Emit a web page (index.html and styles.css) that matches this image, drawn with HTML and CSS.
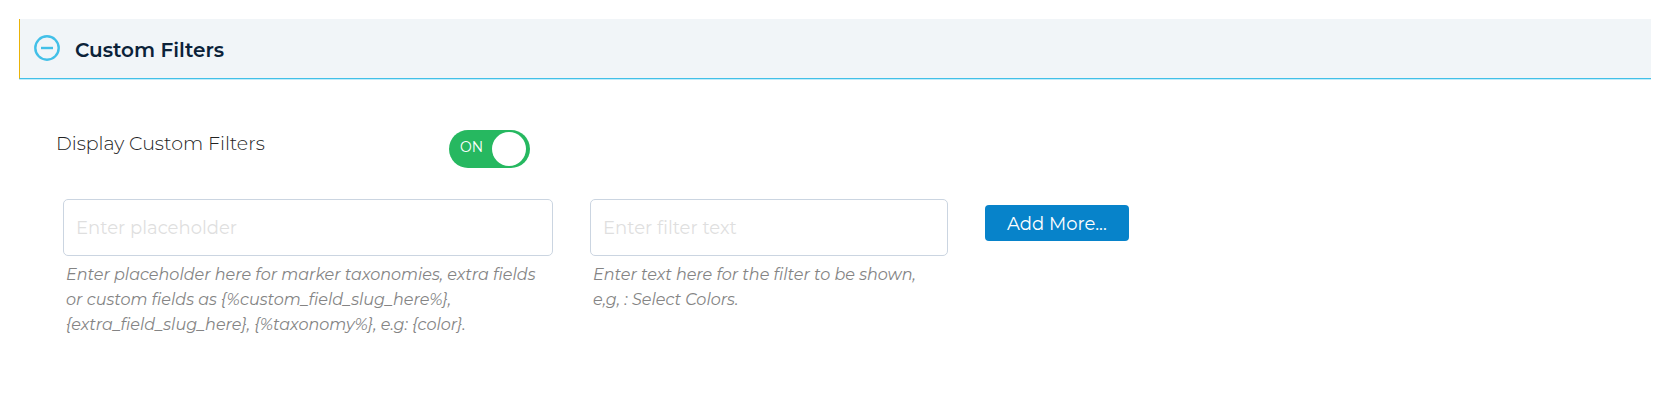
FILE: index.html
```html
<!DOCTYPE html>
<html lang="en">
<head>
    <meta charset="UTF-8">
    <meta name="viewport" content="width=device-width, initial-scale=1.0">
    <title>Custom Filters</title>
    <link rel="stylesheet" href="styles.css">
</head>
<body>

    <section class="panel">
        <h2 class="panel-header">
            <button type="button" class="panel-toggle" aria-expanded="true" aria-controls="custom-filters">
                <svg class="panel-icon" viewBox="0 0 26 26" aria-hidden="true">
                    <circle cx="13" cy="13" r="11.7"/>
                    <path d="M7 13h12"/>
                </svg>
                <span>Custom Filters</span>
            </button>
        </h2>

        <form class="panel-body" id="custom-filters">
            <div class="option-row">
                <label class="option-label" for="display_filters">Display Custom Filters</label>
                <label class="switch">
                    <input type="checkbox" id="display_filters" class="switch-input" checked>
                    <span class="switch-text">ON</span>
                    <span class="switch-knob"></span>
                </label>
            </div>

            <div class="filter-row">
                <div class="field">
                    <input type="text" id="placeholder" class="field-input" placeholder="Enter placeholder" aria-label="Placeholder" aria-describedby="placeholder-help">
                    <p class="field-help" id="placeholder-help">Enter placeholder here for marker taxonomies, extra fields or custom fields as {%custom_field_slug_here%}, {extra_field_slug_here}, {%taxonomy%}, e.g: {color}.</p>
                </div>
                <div class="field">
                    <input type="text" id="filter_text" class="field-input" placeholder="Enter filter text" aria-label="Filter text" aria-describedby="filter-help">
                    <p class="field-help" id="filter-help">Enter text here for the filter to be shown, e,g, : Select Colors.</p>
                </div>
                <div class="actions">
                    <button type="button" class="add-button">Add More...</button>
                </div>
            </div>
        </form>
    </section>

</body>
</html>
```
FILE: styles.css
```css
* {
    box-sizing: border-box;
}
body {
    margin: 0;
    padding: 19px 16px 19px 19px;
    background: #fff;
    color: #222;
    font-family: Montserrat, Inter, sans-serif;
    font-size: 19px;
}
.panel-header {
    margin: 0;
    background: #f1f5f8;
    border-left: 1px solid #eab308;
    border-bottom: 1px solid #42c0e8;
    box-shadow: 0 1px 0 #c3ecf9;
}
.panel-toggle {
    display: flex;
    align-items: center;
    gap: 15px;
    width: 100%;
    padding: 16px 14px 12px;
    border: none;
    background: none;
    color: #0b2239;
    font: inherit;
    font-size: 20px;
    font-weight: 600;
    line-height: 31px;
    text-align: left;
    cursor: pointer;
}
.panel-icon {
    width: 26px;
    height: 26px;
    margin-bottom: 5px;
    fill: none;
    stroke: #42c0e8;
    stroke-width: 2.4;
}
.panel-body {
    padding: 51px 0 0 37px;
}
.option-row {
    display: grid;
    grid-template-columns: 393px auto;
    justify-content: start;
    align-items: start;
}
.option-label {
    padding-top: 2px;
    line-height: 24px;
    font-weight: 300;
}
.switch {
    display: flex;
    justify-content: space-between;
    width: 81px;
    height: 38px;
    padding: 2px 4px 2px 11px;
    border-radius: 19px;
    background: #26b860;
    color: #fff;
    font-size: 14px;
    cursor: pointer;
}
.switch-input {
    position: absolute;
    opacity: 0;
}
.switch-text {
    line-height: 30px;
}
.switch-knob {
    width: 34px;
    height: 34px;
    border-radius: 50%;
    background: #fff;
}
.filter-row {
    display: grid;
    grid-template-columns: 490fr 358fr 666fr;
    gap: 37px;
    padding: 31px 0 0 7px;
}
.field-input {
    display: block;
    width: 100%;
    height: 57px;
    padding: 1px 12px 0;
    border: 1px solid #cbd5e1;
    border-radius: 5px;
    color: #333;
    font: inherit;
    font-size: 18px;
}
.field-input::placeholder {
    color: #dfdfdf;
}
.field-help {
    margin: 6px 0 0;
    padding: 0 3px;
    color: #848484;
    font-size: 16px;
    font-style: italic;
    line-height: 25px;
}
.actions {
    padding-top: 6px;
}
.add-button {
    height: 36px;
    padding: 2px 22px 0;
    border: none;
    border-radius: 4px;
    background: #0783ca;
    color: #fff;
    font: inherit;
    font-size: 18px;
    cursor: pointer;
}
```
